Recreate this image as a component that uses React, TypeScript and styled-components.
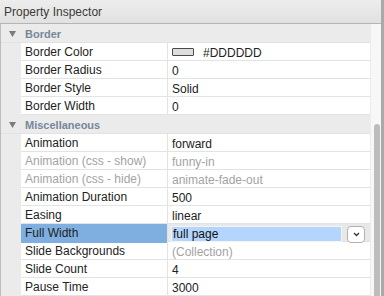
import React from "react";
import styled, { createGlobalStyle } from "styled-components";

type Prop = {
  label: string;
  value?: string;
  muted?: boolean;
  mutedValue?: boolean;
  swatch?: string;
  selected?: boolean;
};

type Section = {
  title: string;
  props: Prop[];
};

const sections: Section[] = [
  {
    title: "Border",
    props: [
      { label: "Border Color", value: "#DDDDDD", swatch: "#dddddd" },
      { label: "Border Radius", value: "0" },
      { label: "Border Style", value: "Solid" },
      { label: "Border Width", value: "0" },
    ],
  },
  {
    title: "Miscellaneous",
    props: [
      { label: "Animation", value: "forward" },
      { label: "Animation (css - show)", value: "funny-in", muted: true },
      { label: "Animation (css - hide)", value: "animate-fade-out", muted: true },
      { label: "Animation Duration", value: "500" },
      { label: "Easing", value: "linear" },
      { label: "Full Width", value: "full page", selected: true },
      { label: "Slide Backgrounds", value: "(Collection)", mutedValue: true },
      { label: "Slide Count", value: "4" },
      { label: "Pause Time", value: "3000" },
    ],
  },
];

const GlobalStyle = createGlobalStyle`
  html, body {
    margin: 0;
    padding: 0;
    background: #fff;
  }
  body {
    font-family: "Liberation Sans", Arial, sans-serif;
  }
`;

const Panel = styled.div`
  width: 384px;
  height: 296px;
  box-sizing: border-box;
  display: flex;
  flex-direction: column;
  border-right: 3px solid #a9a9a9;
  overflow: hidden;
`;

const TitleBar = styled.div`
  height: 23px;
  flex: none;
  padding-left: 4px;
  line-height: 24px;
  font-size: 12px;
  color: #3d3a37;
  background: linear-gradient(#ededed, #e1e1e1);
  border-bottom: 1px solid #b5b5b5;
`;

const Body = styled.div`
  flex: 1;
  display: flex;
  min-height: 0;
`;

const Content = styled.div`
  flex: 1;
  background: #ebebeb;
  border-left: 1px solid #bcbcbc;
`;

const Header = styled.div`
  height: 17px;
  padding-top: 1px;
  display: flex;
  align-items: center;
  gap: 9px;
  padding-left: 8px;
  border-bottom: 1px solid #e2e2e2;
  font-size: 11px;
  font-weight: bold;
  color: #77879a;
`;

const Row = styled.div<{ $selected?: boolean }>`
  margin-left: 20px;
  height: 17px;
  display: grid;
  grid-template-columns: 147px 1fr;
  border-bottom: 1px solid #e3e3e3;
  background: ${(p) => (p.$selected ? "#e8e8e8" : "#fff")};
  font-size: 12px;
`;

const Label = styled.div<{ $muted?: boolean; $selected?: boolean }>`
  padding-left: 4px;
  padding-top: 1px;
  line-height: 17px;
  white-space: nowrap;
  color: ${(p) => (p.$muted ? "#a3a3a3" : "#222")};
  background: ${(p) => (p.$selected ? "#7eafe0" : "transparent")};
  border-right: 1px solid #e3e3e3;
`;

const Value = styled.div<{ $muted?: boolean }>`
  padding-left: 4px;
  padding-top: 1px;
  display: flex;
  align-items: center;
  gap: 9px;
  white-space: nowrap;
  color: ${(p) => (p.$muted ? "#a3a3a3" : "#222")};
`;

const Swatch = styled.span<{ $color: string }>`
  width: 20px;
  height: 6px;
  margin-top: -1px;
  border: 1px solid #4a4a4a;
  border-radius: 1px;
  background: ${(p) => p.$color};
`;

const EditCell = styled.div`
  padding-left: 3px;
  padding-right: 5px;
  display: flex;
  align-items: center;
  gap: 5px;
`;

const Input = styled.div`
  flex: 1;
  height: 14px;
  line-height: 15px;
  padding-left: 1px;
  background: #b4d5fd;
  border: 1px solid #f4f4f4;
  color: #111;
`;

const DropButton = styled.div`
  width: 16px;
  height: 15px;
  margin-top: 2px;
  display: flex;
  align-items: center;
  justify-content: center;
  background: #fff;
  border: 1px solid #b0b0b0;
  border-radius: 4px;
`;

const Track = styled.div`
  width: 11px;
  flex: none;
  background: #f7f7f7;
  border-left: 1px solid #ececec;
  box-sizing: border-box;
  padding-top: 100px;
  display: flex;
  justify-content: center;
`;

const Thumb = styled.div`
  width: 6px;
  height: 200px;
  margin-left: 2px;
  border-radius: 3px;
  background: #bdbdbd;
`;

const Triangle = () => (
  <svg width="7" height="6" viewBox="0 0 7 6">
    <path d="M0 0 H7 L3.5 6 Z" fill="#7b7b7b" />
  </svg>
);

const Chevron = () => (
  <svg width="7" height="5" viewBox="0 0 7 5">
    <path d="M1 1 L3.5 3.5 L6 1" fill="none" stroke="#333" strokeWidth="1.3" />
  </svg>
);

const PropRow = ({ prop }: { prop: Prop }) => (
  <Row $selected={prop.selected}>
    <Label $muted={prop.muted} $selected={prop.selected}>
      {prop.label}
    </Label>
    {prop.selected ? (
      <EditCell>
        <Input>{prop.value}</Input>
        <DropButton>
          <Chevron />
        </DropButton>
      </EditCell>
    ) : (
      <Value $muted={prop.muted || prop.mutedValue}>
        {prop.swatch && <Swatch $color={prop.swatch} />}
        {prop.value}
      </Value>
    )}
  </Row>
);

export default function App() {
  return (
    <>
      <GlobalStyle />
      <Panel>
        <TitleBar>Property Inspector</TitleBar>
        <Body>
          <Content>
            {sections.map((s) => (
              <div key={s.title}>
                <Header>
                  <Triangle />
                  {s.title}
                </Header>
                {s.props.map((p) => (
                  <PropRow key={p.label} prop={p} />
                ))}
              </div>
            ))}
          </Content>
          <Track>
            <Thumb />
          </Track>
        </Body>
      </Panel>
    </>
  );
}
